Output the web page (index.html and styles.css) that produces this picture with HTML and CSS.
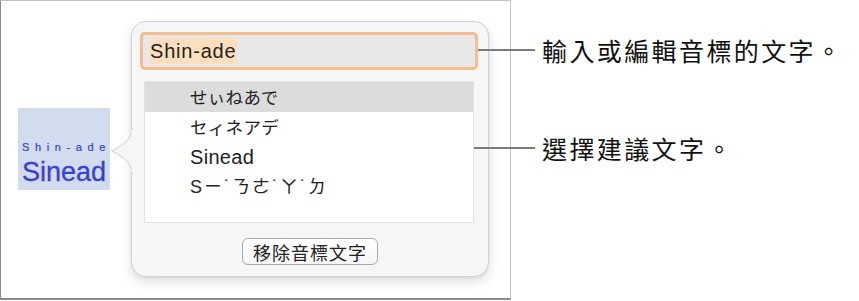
FILE: index.html
```html
<!DOCTYPE html>
<html lang="zh-Hant">
<head>
<meta charset="utf-8">
<title>音標文字</title>
<link rel="stylesheet" href="styles.css">
</head>
<body>
<div class="page">
  <div class="frame">
    <div class="ruby-sample">
      <div class="ruby-text">Shin-ade</div>
      <div class="base-text">Sinead</div>
    </div>
    <div class="popover">
      <svg class="popover-arrow" width="22" height="46" viewBox="0 0 22 46">
        <path d="M21.5,0 C21,10 14,16 1,23 C14,30 21,36 21.5,46" fill="#f6f6f6" stroke="#cfcfcf" stroke-width="1"/>
        <rect x="20.5" y="1" width="1.5" height="44" fill="#f6f6f6"/>
      </svg>
      <div class="field"><span class="field-sel">Shin-ade</span></div>
      <div class="list">
        <div class="row row-selected jp">せぃねあで</div>
        <div class="row jp">セィネアデ</div>
        <div class="row">Sinead</div>
        <div class="row tc">Sㄧ˙ㄋㄜ˙ㄚ˙ㄉ</div>
      </div>
      <div class="actions">
        <button class="btn">移除音標文字</button>
      </div>
    </div>
  </div>
  <div class="callouts">
    <div class="callout callout-1">
      <span class="leader"></span>
      <span class="callout-text">輸入或編輯音標的文字。</span>
    </div>
    <div class="callout callout-2">
      <span class="leader leader-long"></span>
      <span class="callout-text">選擇建議文字。</span>
    </div>
  </div>
</div>
</body>
</html>
```
FILE: styles.css
```css
html, body {
  margin: 0;
  padding: 0;
  background: #ffffff;
}
body {
  font-family: "Liberation Sans", "Noto Sans CJK TC", sans-serif;
  color: #222;
}
.page {
  display: flex;
  align-items: flex-start;
  width: 859px;
  height: 301px;
}
.frame {
  box-sizing: border-box;
  width: 511px;
  height: 300px;
  border-left: 1px solid #8c8c8c;
  border-bottom: 2px solid #8c8c8c;
  border-top: 1px solid #c4c4c4;
  border-right: 1px solid #c4c4c4;
  display: flex;
  align-items: flex-start;
  flex-shrink: 0;
}
.ruby-sample {
  margin-left: 17px;
  margin-top: 107px;
  width: 92px;
  height: 82px;
  background: #d1dcee;
  display: flex;
  flex-direction: column;
  align-items: center;
  color: #3940d6;
}
.ruby-text {
  margin-top: 33px;
  font-size: 11px;
  line-height: 13px;
  letter-spacing: 5.6px;
  margin-right: -5px;
  -webkit-text-stroke: 0.2px #3940d6;
}
.base-text {
  font-size: 27px;
  line-height: 30px;
  margin-top: 3px;
  -webkit-text-stroke: 0.3px #3940d6;
}
.popover {
  position: relative;
  box-sizing: border-box;
  margin-left: 21px;
  margin-top: 20px;
  width: 358px;
  height: 256px;
  background: #f6f6f6;
  border: 1px solid #d2d2d2;
  border-radius: 15px;
  box-shadow: 0 5px 12px rgba(0,0,0,0.13), 0 1px 3px rgba(0,0,0,0.06);
  padding: 10px 0 0 8px;
}
.popover-arrow {
  position: absolute;
  left: -21px;
  top: 106px;
  display: block;
}
.field {
  box-sizing: border-box;
  width: 338px;
  height: 38px;
  border: 3px solid #f5bd8b;
  border-radius: 5px;
  background: #e8e8e8;
  display: flex;
  align-items: center;
  padding-left: 7px;
}
.field-sel {
  background: #fddfbd;
  font-size: 20px;
  line-height: 26px;
  color: #222;
  letter-spacing: 0.8px;
  padding-right: 1px;
}
.list {
  box-sizing: border-box;
  margin-top: 11px;
  margin-left: 4px;
  width: 330px;
  height: 142px;
  background: #ffffff;
  border: 1px solid #e3e3e3;
}
.row {
  height: 30px;
  line-height: 30px;
  padding-left: 45px;
  font-size: 20px;
  letter-spacing: 0.3px;
  color: #222;
}
.row.jp {
  font-family: "Noto Sans CJK JP", sans-serif;
  font-size: 17.5px;
  letter-spacing: 0.3px;
}
.row.tc {
  font-family: "Liberation Sans", "Noto Sans CJK TC", sans-serif;
  font-size: 18px;
  letter-spacing: 2px;
}
.row-selected {
  background: #dcdcdc;
}
.actions {
  display: flex;
  justify-content: center;
  margin-top: 15px;
  margin-left: -8px;
}
.btn {
  box-sizing: border-box;
  width: 136px;
  height: 27px;
  border: 1px solid #a9a9a9;
  border-radius: 6px;
  background: linear-gradient(#ffffff, #f6f6f6);
  font-family: "Noto Sans CJK TC", sans-serif;
  font-size: 18px;
  line-height: 24px;
  color: #222;
  padding: 0;
  letter-spacing: 1px;
}
.callouts {
  position: relative;
  z-index: 1;
  margin-left: -33px;
  padding-top: 33px;
  display: flex;
  flex-direction: column;
}
.callout {
  display: flex;
  align-items: center;
  height: 34px;
}
.callout-2 {
  margin-top: 64px;
}
.leader {
  display: block;
  width: 57px;
  height: 2px;
  background: #7c7c7c;
}
.leader-long {
  width: 61px;
  margin-left: -4px;
}
.callout-text {
  margin-left: 7px;
  font-family: "Noto Sans CJK TC", sans-serif;
  font-size: 25px;
  letter-spacing: 2.4px;
  color: #111;
  white-space: nowrap;
}
```
